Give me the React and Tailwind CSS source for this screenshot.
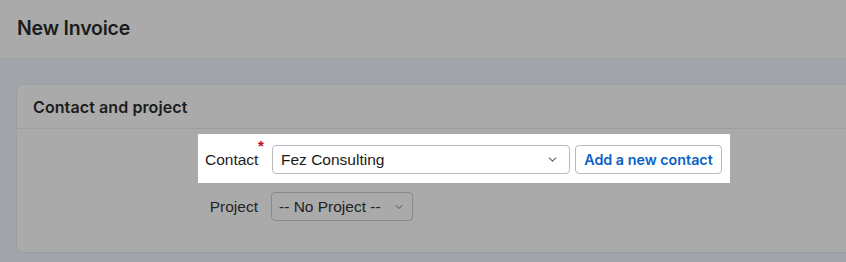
import { ChevronDown } from 'lucide-react';

const sans = { fontFamily: '"Liberation Sans", Arial, sans-serif' };

const App = () => {
    return (
        <div className="w-full h-[262px] overflow-hidden bg-[#a1a4a9]" style={{ fontFamily: 'Inter, "Noto Sans", sans-serif' }}>
            {/* Header */}
            <header className="h-[59px] bg-[#aaaaaa] border-b border-[#9c9ea2] flex items-center px-[17px]">
                <h1 className="text-[19.5px] font-semibold text-[#1c1c1c] tracking-[-0.2px]">New Invoice</h1>
            </header>

            <main className="pt-[25px] pl-4">
                <section className="-mr-3 bg-[#aaaaaa] border border-[#9b9ea2] rounded-l-md">
                    <div className="h-[44px] flex items-center px-4 border-b border-[#9b9ea2]">
                        <h2 className="text-[16px] font-semibold text-[#1c1c1c] tracking-[0.1px]">Contact and project</h2>
                    </div>

                    <div className="pt-[5px] pb-[31px] pl-[181px] flex flex-col items-start" style={sans}>
                        {/* highlighted row */}
                        <div className="bg-white pl-[7px] pr-[8px] pt-[11px] pb-[9px] flex items-center">
                            <label className="w-[53px] text-right text-[15.5px] text-[#222] whitespace-nowrap">Contact</label>
                            <span className="w-[14px] self-start -mt-[7px] text-[#d0021b] text-[15px] font-bold leading-none">*</span>
                            <div className="w-[298px] h-[29px] border border-[#b3bac4] rounded-[4px] flex items-center justify-between pl-[8px] pr-[10px]">
                                <span className="text-[15.5px] text-[#1a1a1a]">Fez Consulting</span>
                                <ChevronDown size={13} strokeWidth={2} className="text-[#5b6470]" />
                            </div>
                            <button className="ml-[5px] w-[147px] h-[29px] border border-[#b3bac4] rounded-[4px] text-[14.3px] font-semibold text-[#0b62c4]" style={{ fontFamily: 'Inter, sans-serif' }}>
                                Add a new contact
                            </button>
                        </div>

                        <div className="mt-[9px] pl-[7px] flex items-center">
                            <label className="w-[53px] text-right text-[15.5px] text-[#252525]">Project</label>
                            <span className="w-[13px]" />
                            <div className="w-[142px] h-[29px] border border-[#86898e] rounded-[4px] flex items-center justify-between pl-[7px] pr-[7px]">
                                <span className="text-[15.5px] text-[#222] whitespace-nowrap">-- No Project --</span>
                                <ChevronDown size={12} strokeWidth={2} className="text-[#4f5358]" />
                            </div>
                        </div>
                    </div>
                </section>
            </main>
        </div>
    );
};

export default App;
